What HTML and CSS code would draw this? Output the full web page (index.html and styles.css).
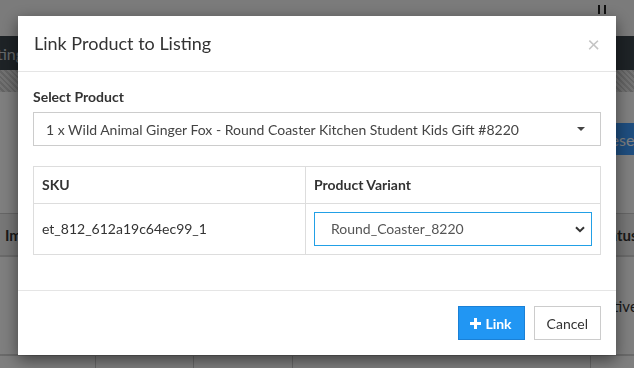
FILE: index.html
```html
<!DOCTYPE html>
<html lang="en">
  <head>
    <meta charset="UTF-8" />
    <meta name="viewport" content="width=device-width, initial-scale=1.0" />
    <title>Link Product to Listing</title>
    <link rel="stylesheet" href="styles.css">
  </head>
  <body>
    <!-- page behind the modal -->
    <div class="page">
      <div class="topbar">
        <span class="top-icon"></span>
      </div>
      <nav class="navbar">
        <span class="nav-text">Listing</span>
      </nav>
      <div class="stripe"></div>
      <div class="toolbar">
        <button class="btn-reset">Reset</button>
      </div>
      <div class="grid-table">
        <div class="grid-row grid-head">
          <div class="cell">Image</div>
          <div class="cell"></div>
          <div class="cell"></div>
          <div class="cell"></div>
          <div class="cell">Status</div>
        </div>
        <div class="grid-row grid-body">
          <div class="cell"></div>
          <div class="cell"></div>
          <div class="cell"></div>
          <div class="cell"></div>
          <div class="cell">Active</div>
        </div>
        <div class="grid-row grid-body">
          <div class="cell"></div>
          <div class="cell"></div>
          <div class="cell"></div>
          <div class="cell"></div>
          <div class="cell"></div>
        </div>
      </div>
    </div>

    <div class="backdrop"></div>

    <div class="modal">
      <div class="modal-header">
        <h4 class="modal-title">Link Product to Listing</h4>
        <span class="close">&times;</span>
      </div>
      <div class="modal-body">
        <div class="form-group">
          <label class="label">Select Product</label>
          <div class="select-box">
            <span>1 x Wild Animal Ginger Fox - Round Coaster Kitchen Student Kids Gift #8220</span>
            <svg class="caret" width="8" height="4" viewBox="0 0 8 4"><path d="M0 0h8L4 4z" fill="#444"/></svg>
          </div>
        </div>
        <table class="link-table">
          <thead>
            <tr>
              <th class="col-sku">SKU</th>
              <th>Product Variant</th>
            </tr>
          </thead>
          <tbody>
            <tr>
              <td>et_812_612a19c64ec99_1</td>
              <td>
                <div class="variant-select">
                  <span>Round_Coaster_8220</span>
                  <svg class="chevron" width="10" height="7" viewBox="0 0 10 7"><path d="M1 1.2l4 4 4-4" fill="none" stroke="#333" stroke-width="2"/></svg>
                </div>
              </td>
            </tr>
          </tbody>
        </table>
      </div>
      <div class="modal-footer">
        <button class="btn btn-link">
          <svg width="11" height="11" viewBox="0 0 11 11"><path d="M5.5 0v11M0 5.5h11" stroke="#fff" stroke-width="3"/></svg>
          Link
        </button>
        <button class="btn btn-cancel">Cancel</button>
      </div>
    </div>
  </body>
</html>
```

FILE: styles.css
```css
body {
  margin: 0;
  font-family: Lato, "Open Sans", sans-serif;
  font-size: 14px;
  color: #333;
  overflow: hidden;
  height: 368px;
}

/* background page */
.page {
  width: 700px;
  background-color: #fefefe;
  height: 368px;
}
.topbar {
  height: 36px;
  background-color: #f6f6f6;
  display: flex;
  justify-content: flex-end;
  padding-right: 94px;
  box-sizing: border-box;
}
.top-icon {
  width: 4px;
  height: 9px;
  margin-top: 5px;
  border-left: 2px solid #222;
  border-right: 2px solid #222;
}
.navbar {
  height: 34px;
  background-color: #3c464d;
  display: flex;
  align-items: center;
}
.nav-text {
  margin-left: -22px;
  color: #c9cfd3;
  font-size: 16px;
}
.stripe {
  height: 22px;
  background: repeating-linear-gradient(45deg, #e4e4e4 0 2px, #c9c9c9 2px 4px);
}
.toolbar {
  display: flex;
  padding: 31px 0 0 593px;
  height: 58px;
  box-sizing: border-box;
}
.btn-reset {
  height: 32px;
  padding: 0 8px;
  border: none;
  background-color: #3e9cff;
  color: #fff;
  font-family: inherit;
  font-size: 16px;
}
.grid-table {
  margin-top: 63px;
  border-top: 1px solid #ccc;
}
.grid-row {
  display: grid;
  grid-template-columns: 96px 98px 99px 298px 100px;
  border-bottom: 2px solid #d4d4d4;
}
.grid-head {
  height: 41px;
  background-color: #eeeeee;
  font-weight: bold;
}
.grid-body {
  height: 97px;
}
.cell {
  border-right: 1px solid #cfcfcf;
  padding: 0 4px 0 5px;
  display: flex;
  align-items: center;
  font-size: 15px;
}

.backdrop {
  position: fixed;
  inset: 0;
  background-color: rgba(0, 0, 0, 0.5);
}

/* modal */
.modal {
  position: fixed;
  top: 16px;
  left: 18px;
  width: 598px;
  box-sizing: border-box;
  background-color: #fff;
  box-shadow: 0 5px 15px rgba(0, 0, 0, 0.5);
}
.modal-header {
  padding: 15px;
  border-bottom: 1px solid #e5e5e5;
  display: flex;
  justify-content: space-between;
  align-items: center;
}
.modal-title {
  margin: 0 0 0 1px;
  font-size: 18px;
  font-weight: normal;
  line-height: 25px;
}
.close {
  font-size: 22px;
  color: #c4c4c4;
  line-height: 1;
  margin-right: 1px;
}
.modal-body {
  padding: 15px;
}
.form-group {
  margin-bottom: 20px;
}
.label {
  display: block;
  font-weight: bold;
  line-height: 20px;
  margin-bottom: 5px;
}
.select-box {
  height: 34px;
  box-sizing: border-box;
  border: 1px solid #ccc;
  padding: 0 12px;
  display: flex;
  align-items: center;
  justify-content: space-between;
  color: #444;
}
.caret {
  margin-right: 3px;
}
.link-table {
  width: 100%;
  border-collapse: collapse;
  margin-bottom: 20px;
}
.link-table th,
.link-table td {
  border: 1px solid #ddd;
  padding: 8px;
  text-align: left;
  line-height: 20px;
}
.col-sku {
  width: 255px;
}
.variant-select {
  height: 34px;
  box-sizing: border-box;
  border: 1px solid #22a0e6;
  padding: 0 6px 0 16px;
  display: flex;
  align-items: center;
  justify-content: space-between;
  color: #555;
}
.modal-footer {
  padding: 15px;
  border-top: 1px solid #e5e5e5;
  display: flex;
  justify-content: flex-end;
  gap: 9px;
}
.btn {
  height: 34px;
  padding: 0 12px;
  font-family: inherit;
  font-size: 14px;
  border: 1px solid #ccc;
  background-color: #fff;
  color: #333;
  display: flex;
  align-items: center;
  gap: 4px;
}
.btn-link {
  background-color: #2196f3;
  border-color: #1a80d6;
  color: #fff;
  font-weight: bold;
  padding: 0 12px 0 11px;
}
```
